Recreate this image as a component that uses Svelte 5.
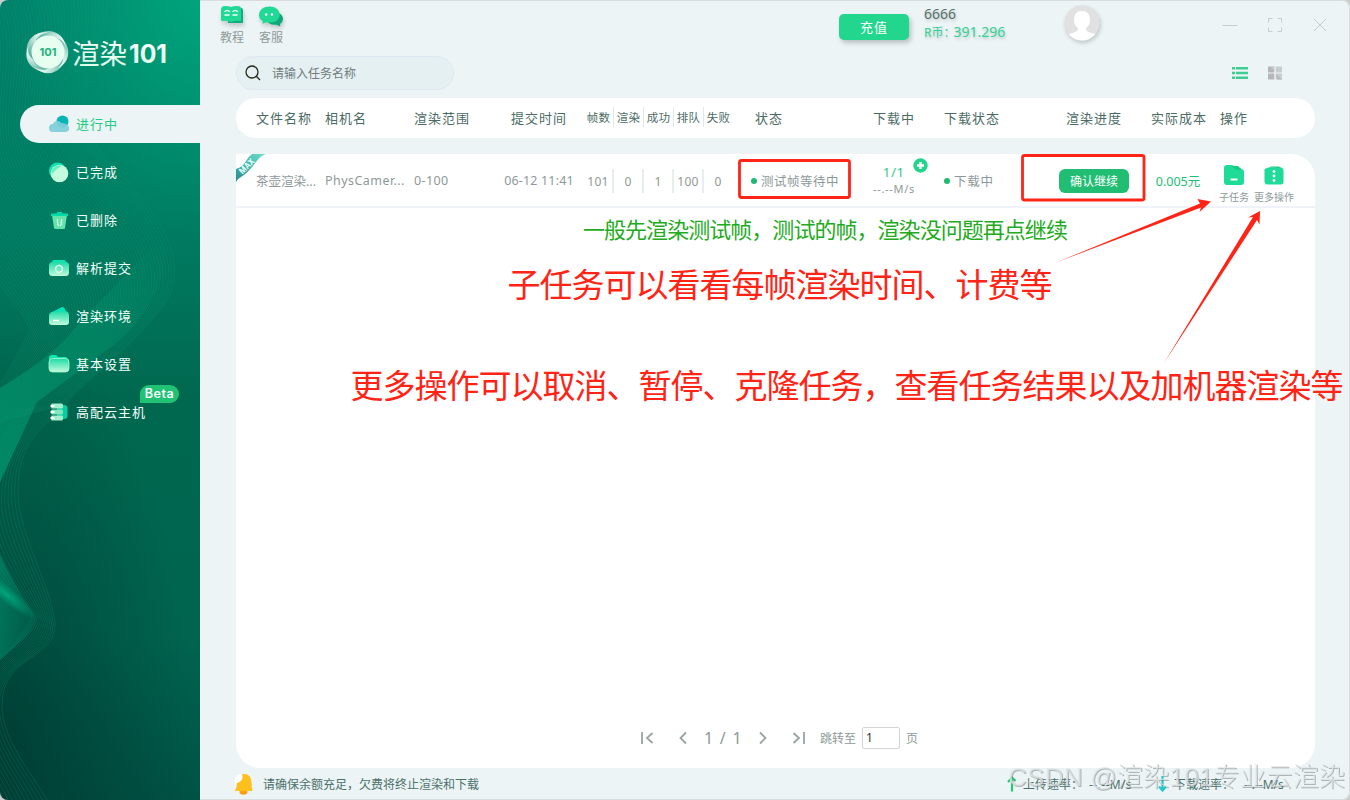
<script>
  // Render client: running task list with sidebar, pager and status bar.
  const menu = [
    { id: 'running', label: '进行中', active: true },
    { id: 'done', label: '已完成' },
    { id: 'trash', label: '已删除' },
    { id: 'parse', label: '解析提交' },
    { id: 'env', label: '渲染环境' },
    { id: 'settings', label: '基本设置' },
    { id: 'cloud', label: '高配云主机', badge: 'Beta' }
  ];

  const frameHeads = ['帧数', '渲染', '成功', '排队', '失败'];

  const task = {
    name: '茶壶渲染...',
    camera: 'PhysCamer...',
    range: '0-100',
    time: '06-12 11:41',
    frames: [101, 0, 1, 100, 0],
    status: '测试帧等待中',
    cost: '0.005元'
  };

  // Sidebar waves: every line is a blend of two curves
  const upperOuter = [106,0, 112,55, 60,95, 100,150, 150,205, 200,260, 160,310, 130,350, 90,375, 65,405];
  const upperInner = [-95,0, -50,55, -75,130, -60,190, -30,260, 20,300, 30,330, 10,370, -10,400, -30,430];
  const lowerOuter = [65,405, 30,435, 17,455, 18,495, 19,535, 55,595, 55,625, 55,660, 2,655, 2,705, 2,740, 30,770, 47,800];
  const lowerInner = [20,408, -5,450, -25,470, -25,520, -20,560, 5,585, 32,615, 20,650, -30,680, -34,725, -34,760, -15,780, -5,810];

  function wave(a, b, t) {
    const p = a.map((v, i) => (v + (b[i] - v) * t).toFixed(1));
    return `M${p[0]} ${p[1]}C${p.slice(2).join(' ')}`;
  }

  function family(a, b, n) {
    return Array.from({ length: n }, (_, i) => wave(a, b, i / (n - 1)));
  }

  const waves = [...family(upperOuter, upperInner, 56), ...family(lowerOuter, lowerInner, 14)];
  const blades = [0, 72, 144, 216, 288];
</script>

<div class="window">
  <aside class="sidebar">
    <svg class="waves" width="200" height="800" viewBox="0 0 200 800" fill="none">
      <defs>
        <linearGradient id="band" x1="0" y1="1" x2="1" y2="0">
          <stop offset="0" stop-color="#00a678" stop-opacity=".6" />
          <stop offset=".75" stop-color="#00a678" stop-opacity=".18" />
          <stop offset="1" stop-color="#00a678" stop-opacity="0" />
        </linearGradient>
        <linearGradient id="fold" x1="0" y1="0" x2="1" y2="0">
          <stop offset="0" stop-color="#009a74" stop-opacity=".5" />
          <stop offset="1" stop-color="#009a74" stop-opacity=".1" />
        </linearGradient>
        <radialGradient id="glow">
          <stop offset="0" stop-color="#00b184" stop-opacity=".8" />
          <stop offset="1" stop-color="#00b184" stop-opacity="0" />
        </radialGradient>
      </defs>
      <path d="M0 388Q55 355 75 328Q110 290 165 235Q172 290 120 340Q60 385 37 402L0 482Z" fill="url(#band)" />
      <path d="M0 555Q20 595 37 618Q36 630 20 642L0 660Z" fill="url(#fold)" />
      <ellipse cx="6" cy="594" rx="38" ry="8" transform="rotate(40 6 594)" fill="url(#glow)" />
      {#each waves as d}
        <path {d} stroke="#12a57c" stroke-opacity=".27" stroke-width=".8" />
      {/each}
    </svg>

    <svg class="logo" width="150" height="50" viewBox="0 0 150 50">
      <defs>
        <linearGradient id="blade" x1="0" y1="0" x2="1" y2="0">
          <stop offset="0" stop-color="#fff" stop-opacity=".15" />
          <stop offset="1" stop-color="#f2fff6" stop-opacity=".95" />
        </linearGradient>
        <linearGradient id="word" x1="0" y1="0" x2="0" y2="1">
          <stop offset="0" stop-color="#fff" />
          <stop offset="1" stop-color="#d9ffe5" />
        </linearGradient>
      </defs>
      {#each blades as b}
        <path d="M5 20Q10 4 25 4Q39 5 42 20Q38 10 28 11Q12 10 5 20Z" transform="rotate({b} 23 25)" fill="url(#blade)" />
      {/each}
      <circle cx="24" cy="25" r="16.500" fill="#e6fff0" />
      <text x="15.500" y="29" class="coin-text" textLength="17" lengthAdjust="spacingAndGlyphs">101</text>
      <text x="48" y="36.500" class="word-cn" textLength="55">渲染</text>
      <text x="105" y="35.500" class="word-num" textLength="38" lengthAdjust="spacingAndGlyphs">101</text>
    </svg>

    <nav>
      {#each menu as item}
        <a class="item" class:active={item.active} href="#{item.id}">
          <svg class="item-icon" width="22" height="22" viewBox="0 0 22 22">
            <defs>
              <linearGradient id="g-{item.id}" x1="0" y1="0" x2="0" y2="1">
                <stop offset="0" stop-color="#1cdba6" />
                <stop offset="1" stop-color="#c3fbdc" />
              </linearGradient>
            </defs>
            {#if item.id === 'running'}
              <circle cx="14.500" cy="8.500" r="6" fill="#08b5b5" />
              <path d="M5 19a4 4 0 0 1 0-8c1-3.500 6-4 8-1q6 0 8 4v3q-1 2-4 2z" fill="#7fcdda" opacity=".93" />
            {:else if item.id === 'done'}
              <circle cx="9.500" cy="10" r="8.500" fill="#10e2b0" />
              <circle cx="11.500" cy="12.500" r="8.800" fill="#c3fbdc" />
              <path d="M3.500 10Q8 3 14 5Q9 7 4 13Z" fill="#65edbd" />
            {:else if item.id === 'trash'}
              <path d="M4 6h15l-2 13q0 1-2 1H8q-2 0-2-1z" fill="#62e4ab" />
              <path d="M3 4.500h6V3h5v1.500h6V7H3z" fill="#04d9ac" />
              <path d="M9.500 10v4q0 2 1.500 3M13.500 10v4q0 2-1.500 3" fill="none" stroke="#d8ffeb" stroke-width="1.400" />
            {:else if item.id === 'parse'}
              <rect x="4" y="3" width="14" height="8" rx="2" fill="#05e6b3" />
              <rect x="1" y="5" width="20" height="14" rx="3.500" fill="url(#g-parse)" />
              <circle cx="11" cy="12" r="3.400" fill="none" stroke="#e2fff0" stroke-width="1.500" />
            {:else if item.id === 'env'}
              <path d="M2 8L14 2q3 0 4 5l3 4-18 2z" fill="#04e5b5" />
              <path d="M1 11q0-3 3-4l14-1q3 1 3 4v7q0 3-3 3H4q-3 0-3-3z" fill="url(#g-env)" />
              <path d="M5 15.500h6" stroke="#fff" stroke-width="1.400" />
            {:else if item.id === 'settings'}
              <path d="M1 5q0-3 3-3h4l2 2h7q3 0 3 4H1z" fill="#10e6b1" />
              <rect x="1" y="5.500" width="20" height="13.500" rx="3.500" fill="url(#g-settings)" stroke="#a9f5cf" stroke-width=".8" />
            {:else}
              <rect x="9" y="4" width="10.500" height="14" rx="3.500" fill="#08cda2" />
              <rect x="3" y="2.500" width="12" height="5" rx="1.500" fill="#a1efcd" />
              <rect x="3" y="8.500" width="12" height="5" rx="1.500" fill="#82e8be" />
              <rect x="3" y="14.500" width="12" height="5" rx="1.500" fill="#a1efcd" />
              <path d="M2.500 5h4M2.500 11h4M2.500 17h4" stroke="#fff" stroke-width="2" />
            {/if}
          </svg>
          <span>{item.label}</span>
          {#if item.badge}<em class="beta">{item.badge}</em>{/if}
        </a>
      {/each}
    </nav>
  </aside>

  <main>
    <header class="topbar">
      <a class="tool" href="#guide">
        <svg width="24" height="24" viewBox="0 0 24 24">
          <path d="M7 4h14q2 0 2 2v13H8z" fill="#10ad7e" />
          <path d="M2 3Q3 2 5 2q4 0 6 1 2-1 6-1 4 0 4 2v13q-6-1-10 1-4-2-9-1-1 0-1-2V5z" fill="#1fd995" />
          <path d="M4.500 7.500L7 6.500l3 1M4.500 11h5M12.500 7.500l2.500-1 3 1M12.500 11h5" fill="none" stroke="#fff" stroke-width="1.300" />
        </svg>
        <span>教程</span>
      </a>
      <a class="tool" href="#service">
        <svg width="25" height="24" viewBox="0 0 26 24">
          <path d="M14 9q9-2 11 5 0 5-3 6v3l-4-2q-8 1-10-5z" fill="#10a87a" />
          <path d="M11 2C5 2 0 5.500 0 11q0 4 4 6.500L3.500 20l4-1.500Q21 20 21.500 11C21.500 5.500 17 2 11 2z" fill="#1fd995" />
          <circle cx="7.500" cy="10.500" r="1.300" fill="#fff" /><circle cx="13.500" cy="10.500" r="1.300" fill="#fff" />
        </svg>
        <span>客服</span>
      </a>
      <button class="recharge">充值</button>
      <div class="account">
        <div class="uid">6666</div>
        <div class="coin">R币：<b>391.296</b></div>
      </div>
      <svg class="avatar" width="36" height="36" viewBox="0 0 36 36">
        <clipPath id="face"><circle cx="18" cy="18" r="17.500" /></clipPath>
        <g clip-path="url(#face)">
          <rect width="36" height="36" fill="#e1e1e1" />
          <path d="M18 6q8 0 8 9 0 5-4 8v2q1 2 9 4v7H5v-7q8-2 9-4v-2q-4-3-4-8 0-9 8-9z" fill="#fff" />
        </g>
      </svg>
      <div class="win-buttons">
        <svg width="16" height="16" viewBox="0 0 16 16"><path d="M.5 8.500h15" /></svg>
        <svg width="16" height="16" viewBox="0 0 16 16"><path d="M1.500 5.500v-4h4M10.500 1.500h4v4M14.500 10.500v4h-4M5.500 14.500h-4v-4" /></svg>
        <svg width="16" height="16" viewBox="0 0 16 16"><path d="M2 2l12 12M14 2L2 14" /></svg>
      </div>
    </header>

    <div class="filters">
      <label class="search">
        <svg width="16" height="16" viewBox="0 0 16 16" fill="none" stroke="#26281c" stroke-width="1.300">
          <circle cx="7" cy="7" r="6" /><path d="M11.300 11.300L15 15" />
        </svg>
        <span>请输入任务名称</span>
      </label>
      <div class="views">
        <svg width="16" height="14" viewBox="0 0 16 14" stroke="#3fce91" stroke-width="2.400">
          <path d="M0 2.200h3M4 2.200H16M0 7h3M4 7H16M0 11.800h3M4 11.800H16" />
        </svg>
        <svg width="14" height="14" viewBox="0 0 14 14">
          <path d="M0 .5h6.300v6H0zM0 7.500h6.300v6H0z" fill="#b6b6b6" />
          <path d="M7.700.5H14v6H7.700zM7.700 7.500H14v6H7.700zM2 .5h4.300v4z" fill="#c9ccd0" />
          <path d="M8 8l6 5.500H9z" fill="#b9b9b9" />
        </svg>
      </div>
    </div>

    <div class="grid head">
      <div>文件名称</div>
      <div>相机名</div>
      <div>渲染范围</div>
      <div class="mid">提交时间</div>
      <div class="frames">
        {#each frameHeads as f}<span>{f}</span>{/each}
      </div>
      <div class="state-head">状态</div>
      <div class="mid">下载中</div>
      <div class="dl-head">下载状态</div>
      <div class="mid">渲染进度</div>
      <div class="mid">实际成本</div>
      <div class="ops-head">操作</div>
    </div>

    <section class="list">
      <div class="grid row">
        <svg class="ribbon" width="30" height="28" viewBox="0 0 30 28">
          <defs>
            <linearGradient id="rib" x1="0" y1="1" x2="1" y2="0">
              <stop offset="0" stop-color="#268d8f" /><stop offset="1" stop-color="#6ce0cc" />
            </linearGradient>
          </defs>
          <path d="M16 0h14Q25 1 20 8Q12 19 5 23Q1 25 0 28V15Q7 13 10 7Q13 2 16 0z" fill="url(#rib)" />
          <text x="0" y="0" transform="translate(6.500 20.500) rotate(-45)" textLength="18" lengthAdjust="spacingAndGlyphs">MAX</text>
        </svg>
        <div>{task.name}</div>
        <div class="camera">{task.camera}</div>
        <div class="range">{task.range}</div>
        <div class="mid date">{task.time}</div>
        <div class="frames">
          {#each task.frames as f}<span>{f}</span>{/each}
        </div>
        <div class="state"><i></i>{task.status}</div>
        <div class="speed">
          <div class="count">1/1
            <svg width="15" height="15" viewBox="0 0 15 15">
              <circle cx="7.500" cy="7.500" r="7.200" fill="#22d38b" /><path d="M7.500 4v7M4 7.500h7" stroke="#fff" stroke-width="2.400" />
            </svg>
          </div>
          <div class="rate">--.--M/s</div>
        </div>
        <div class="dl"><i></i>下载中</div>
        <div class="mid"><button class="confirm">确认继续</button></div>
        <div class="mid cost">{task.cost}</div>
        <div class="ops">
          <a href="#sub">
            <svg width="20" height="20" viewBox="0 0 20 20">
              <path d="M0 3q0-3 3-3h5l3 1.500 6 2q3 1 3 3V17q0 3-3 3H3q-3 0-3-3z" fill="#1edc98" />
              <path d="M8 1h6l3 3-3 1-5-2z" fill="#13c984" /><path d="M6.500 14.500h7" stroke="#fff" stroke-width="2" />
            </svg>
            <span>子任务</span>
          </a>
          <a href="#more">
            <svg width="20" height="20" viewBox="0 0 20 20">
              <path d="M.5 4l4-1.500h13q2 1 2 3V17q0 2.500-3 2.500h-13q-3 0-3-3z" fill="#1edc98" />
              <path d="M5 2.500l2-1h8l2 1.500z" fill="#13c984" />
              <g fill="#fff"><circle cx="10" cy="6.500" r="1.400" /><circle cx="10" cy="11" r="1.400" /><circle cx="10" cy="15.500" r="1.400" /></g>
            </svg>
            <span>更多操作</span>
          </a>
        </div>
      </div>

      <div class="pager">
        <svg width="14" height="14" viewBox="0 0 14 14"><path d="M2 1v12M12.500 2L7 7l5.500 5" /></svg>
        <svg width="14" height="14" viewBox="0 0 14 14"><path d="M10 1.500L4.500 7l5.500 5.500" /></svg>
        <span class="pages">1 / 1</span>
        <svg width="14" height="14" viewBox="0 0 14 14"><path d="M4 1.500L9.500 7 4 12.500" /></svg>
        <svg width="14" height="14" viewBox="0 0 14 14"><path d="M1.500 2L7 7l-5.500 5M12 1v12" /></svg>
        <span class="jump">跳转至</span>
        <span class="box">1</span>
        <span>页</span>
      </div>
    </section>

    <footer>
      <svg width="20" height="22" viewBox="0 0 20 22">
        <ellipse cx="9.500" cy="19" rx="4" ry="2.800" fill="#ff9e12" />
        <path d="M3 9q0-8 7-8 7.500 0 7.500 9 0 4 1 8H1q2-4 2-9z" fill="#ffbf1d" />
        <path d="M1 8q-1-7 7-7 3 7-7 10z" fill="#fff" />
      </svg>
      <span class="notice">请确保余额充足，欠费将终止渲染和下载</span>
      <svg class="up" width="9" height="16" viewBox="0 0 9 16"><path d="M5 15.500V2M1 6L5 1.500 8.500 5" stroke="#23c875" stroke-width="2.200" fill="none" /></svg>
      <span class="up-text">上传速率：</span><span class="up-rate">--.--M/s</span>
      <svg width="9" height="16" viewBox="0 0 9 16"><path d="M4.500 0v14M1 10.500l3.500 4 3.500-4" stroke="#1dc8c8" stroke-width="2.200" fill="none" /></svg>
      <span class="down-text">下载速率：</span><span>--.--M/s</span>
    </footer>
  </main>

  <!-- Notes over the list -->
  <svg class="notes" width="1350" height="800" viewBox="0 0 1350 800">
    <g fill="none" stroke="#ff2416" stroke-width="2.800">
      <rect x="739.500" y="160.500" width="110" height="37" rx="2" />
      <rect x="1022.500" y="155.500" width="121.500" height="44.500" rx="2" />
    </g>
    <g fill="#ff2416">
      <path d="M1056 262.500L1200 203.500 1197.500 199 1211 201.500 1199.500 212 1201 207.500z" />
      <path d="M1164 363L1253 217 1248 217.500 1260 211 1259.500 224.500 1257 220z" />
    </g>
    <text class="note-green" x="583" y="237.500">一般先渲染测试帧，测试的帧，渲染没问题再点继续</text>
    <text class="note-red" x="507.500" y="296.500">子任务可以看看每帧渲染时间、计费等</text>
    <text class="note-red" x="350.500" y="397.500">更多操作可以取消、暂停、克隆任务，查看任务结果以及加机器渲染等</text>
    <text class="mark" x="1008" y="786" textLength="337">CSDN @渲染101专业云渲染</text>
  </svg>
</div>

<style>
  :global(body) { background: #ccc; }
  .window, .window * { box-sizing: border-box; }
  .window {
    position: relative;
    display: flex;
    width: 1350px;
    height: 800px;
    overflow: hidden;
    border-radius: 8px;
    background: #ecf4f6;
    box-shadow: inset 0 0 0 1px #d9dcdd;
    font-family: "Noto Sans", "Noto Sans CJK SC", sans-serif;
    font-size: 13px;
    color: #8d9998;
  }
  a { color: inherit; text-decoration: none; }
  svg { display: block; flex: none; }
  button { border: 0; padding: 0; font: inherit; color: #fff; }

  /* sidebar */
  .sidebar {
    position: relative;
    flex: none;
    width: 200px;
    background:
      radial-gradient(ellipse 200px 240px at 100% 0, #00a47c, rgba(0, 164, 124, 0) 100%),
      radial-gradient(ellipse 190px 420px at 0 92%, rgba(0, 40, 36, .55), rgba(0, 40, 36, 0) 100%),
      linear-gradient(180deg, #00806a 0, #007a60 30%, #00684f 50%, #00644f 80%, #005244 100%);
  }
  .waves { position: absolute; left: 0; top: 0; }
  .logo { position: relative; margin: 27px 0 28px 24px; }
  .coin-text { font: 700 11px Inter, sans-serif; fill: #22b27a; }
  .word-cn { font: 400 27.500px "Noto Sans CJK SC", sans-serif; fill: url(#word); }
  .word-num { font: 700 25px Inter, sans-serif; fill: url(#word); }
  nav { position: relative; }
  .item {
    display: flex;
    align-items: center;
    height: 38px;
    margin: 0 0 10px 20px;
    padding-left: 28px;
    border-radius: 19px 0 0 19px;
    color: #f2fffa;
    letter-spacing: 1px;
  }
  .item span { margin: 0 0 2px 6px; }
  .item.active { background: #ecf4f6; color: #21cc82; }
  .beta {
    position: absolute;
    left: 140px;
    top: 280px;
    width: 39px;
    height: 18px;
    border-radius: 9px 9px 9px 0;
    background: #20c373;
    color: #fff;
    font: 600 12.500px/18px Inter, sans-serif;
    letter-spacing: .5px;
    text-align: center;
  }

  /* top */
  main { flex: 1; display: flex; flex-direction: column; padding: 0 35px 0 36px; min-width: 0; }
  .topbar { display: flex; height: 56px; margin: 0 -35px 0 -16px; flex: none; }
  .tool {
    width: 24px;
    margin-right: 15px;
    padding-top: 4px;
    font-size: 12px;
    color: #8f9a98;
  }
  .tool svg { filter: drop-shadow(1px 3px 2px rgba(0, 0, 0, .18)); }
  .tool span { display: block; line-height: 16px; margin-top: 2px; white-space: nowrap; }
  .recharge {
    width: 70px;
    height: 26px;
    margin: 14px 15px 0 541px;
    padding-bottom: 2px;
    border-radius: 5px;
    background: #22d68d;
    box-shadow: 2px 3px 5px rgba(0, 0, 0, .22);
    letter-spacing: 1px;
  }
  .account { width: 125px; padding-top: 5px; line-height: 18px; text-shadow: 1px 2px 3px rgba(0, 0, 0, .2); white-space: nowrap; }
  .uid { font-size: 14px; color: #567069; }
  .coin { font-size: 12px; color: #33d293; }
  .coin b { font-weight: 400; font-size: 14px; margin-left: -2px; }
  .avatar { margin: 5px 0 0 15px; filter: drop-shadow(1px 2px 2px rgba(0, 0, 0, .2)); }
  .win-buttons { display: flex; gap: 29px; margin: 17px 0 0 122px; }
  .win-buttons svg { fill: none; stroke: #c8cccd; }

  .filters { display: flex; justify-content: space-between; align-items: center; height: 34px; flex: none; }
  .search {
    display: flex;
    align-items: center;
    width: 218px;
    height: 34px;
    padding-left: 8px;
    border: 1px solid #dfe8f3;
    border-radius: 17px;
    background: #e5f0f2;
    font-size: 12px;
    color: #717c7c;
  }
  .search span { margin-left: 11px; }
  .views { display: flex; gap: 20px; margin-right: 33px; }

  /* table */
  .grid {
    display: grid;
    grid-template-columns: 69px 89px 80px 90px 150px 121px 78px 110px 102px 68px 1fr;
    align-items: center;
    padding-left: 20px;
    white-space: nowrap;
  }
  .head {
    flex: none;
    height: 40px;
    margin-top: 8px;
    padding-bottom: 2px;
    border-radius: 20px;
    background: #fff;
    color: #4b6b65;
    letter-spacing: 1px;
  }
  .mid { text-align: center; }
  .frames { display: flex; }
  .frames span {
    flex: 0 0 30px;
    height: 20px;
    line-height: 22px;
    border-right: 1px solid #dfe9e9;
    font-size: 11.500px;
    letter-spacing: .3px;
    text-align: center;
  }
  .frames span:last-child { border-color: transparent; }
  .state-head { padding-left: 21px; }
  .dl-head { padding-left: 11px; }
  .ops-head { padding-left: 7px; }

  .list {
    position: relative;
    display: flex;
    flex-direction: column;
    justify-content: space-between;
    flex: none;
    height: 614px;
    margin-top: 16px;
    border-radius: 0 24px 24px 24px;
    background: #fff;
  }
  .row { height: 54px; padding-top: 1px; border-bottom: 2px solid #eff2f9; font-size: 12.500px; }
  .row .frames span { height: 24px; line-height: 26px; border-right: 2px solid #e8eeee; font-size: 12px; }
  .row .frames span:last-child { border-color: transparent; }
  .ribbon { position: absolute; left: 0; top: 0; }
  .ribbon text { font: 700 8.500px Inter, sans-serif; fill: #e5fffb; }
  .camera { letter-spacing: .45px; }
  .range { letter-spacing: .4px; }
  .date { font-size: 12.500px; letter-spacing: .15px; }
  .state, .dl { display: flex; align-items: center; padding-left: 17px; letter-spacing: .5px; }
  .dl { padding-left: 11px; letter-spacing: .8px; }
  .state i, .dl i { width: 6px; height: 6px; margin-right: 4px; border-radius: 50%; background: #22ba70; }
  .speed { text-align: center; line-height: 16px; }
  .count { position: relative; color: #25c77c; letter-spacing: 1px; }
  .count svg { position: absolute; left: 58px; top: -7px; }
  .rate { font-size: 11px; letter-spacing: .7px; }
  .confirm { width: 70px; height: 24px; border-radius: 6px; background: #20bd72; font-size: 12px; vertical-align: middle; }
  .cost { color: #24bd74; margin-left: -2px; }
  .ops { display: flex; gap: 5px; padding: 7px 0 0 6px; font-size: 10px; }
  .ops a { display: flex; flex-direction: column; align-items: center; }
  .ops span { line-height: 14px; margin-top: 5px; }

  .pager { display: flex; align-items: center; height: 60px; padding-left: 404px; font-size: 12px; }
  .pager svg { fill: none; stroke: #98a4a2; stroke-width: 1.800; }
  .pager svg + svg { margin-left: 22px; }
  .pages { width: 38px; margin: 0 14px; font-size: 16px; word-spacing: 2.500px; white-space: nowrap; }
  .jump { margin-left: 14px; }
  .box {
    width: 38px;
    height: 22px;
    margin: 0 6px;
    padding-left: 3px;
    border: 1px solid #d2d5d5;
    border-radius: 2px;
    line-height: 20px;
    color: #333;
  }

  footer { display: flex; align-items: center; height: 32px; margin: 0 -35px 0 -2px; font-size: 12px; color: #4a716a; white-space: nowrap; }
  .notice { width: 735px; margin-left: 9px; }
  .up { margin-left: 9px; }
  .up-text { width: 60px; margin-left: 7px; }
  .up-rate { width: 52px; margin: 0 17px 0 6px; letter-spacing: .4px; }
  .down-text { width: 70px; margin-left: 7px; }

  .notes { position: absolute; left: 0; top: 0; pointer-events: none; }
  .notes text { font-family: "Noto Sans CJK SC", sans-serif; }
  .note-green { font-size: 22px; letter-spacing: -.96px; fill: #22ab20; }
  .note-red { font-size: 33px; letter-spacing: -1px; fill: #ff2416; }
  .notes .mark { font-family: "Liberation Sans", "Noto Sans CJK SC", sans-serif; font-weight: 300; font-size: 26px; fill: rgba(225, 229, 231, .75); filter: drop-shadow(1px 1px 0 rgba(110, 115, 118, .65)); }
</style>
